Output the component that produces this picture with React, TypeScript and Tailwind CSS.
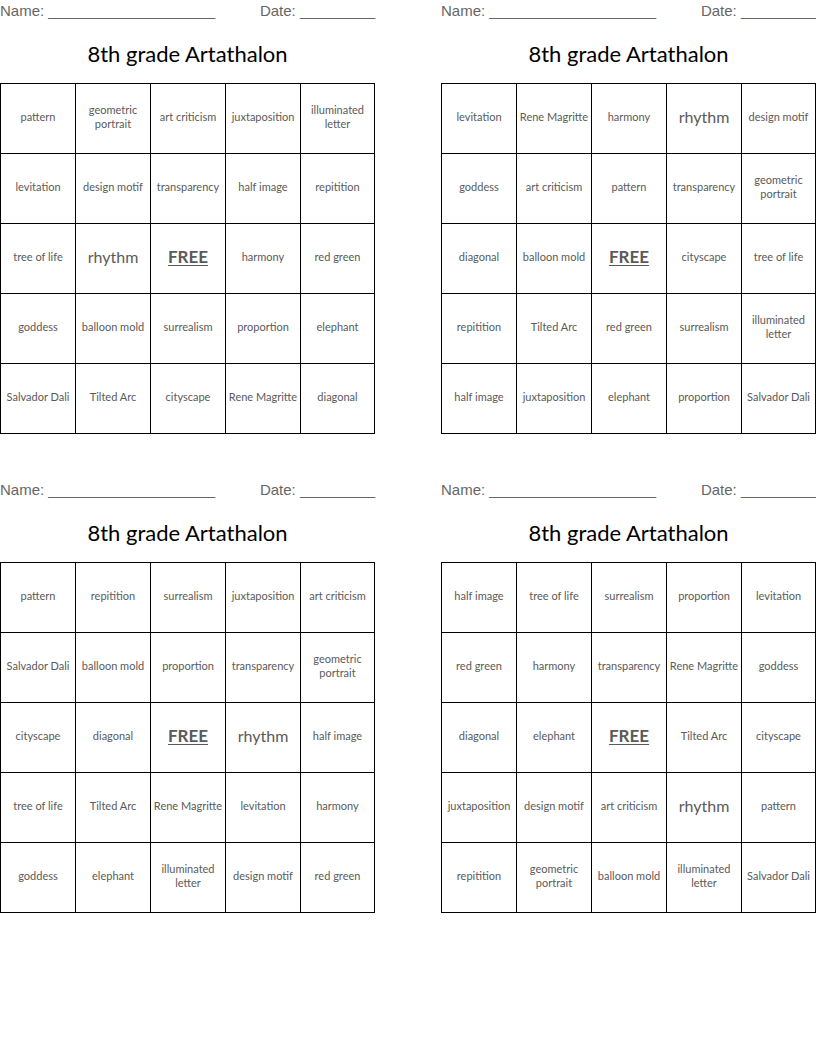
import React from 'react'

type Card = string[][]

const cards: Card[] = [
  [
    ['pattern', 'geometric portrait', 'art criticism', 'juxtaposition', 'illuminated letter'],
    ['levitation', 'design motif', 'transparency', 'half image', 'repitition'],
    ['tree of life', 'rhythm', 'FREE', 'harmony', 'red green'],
    ['goddess', 'balloon mold', 'surrealism', 'proportion', 'elephant'],
    ['Salvador Dali', 'Tilted Arc', 'cityscape', 'Rene Magritte', 'diagonal'],
  ],
  [
    ['levitation', 'Rene Magritte', 'harmony', 'rhythm', 'design motif'],
    ['goddess', 'art criticism', 'pattern', 'transparency', 'geometric portrait'],
    ['diagonal', 'balloon mold', 'FREE', 'cityscape', 'tree of life'],
    ['repitition', 'Tilted Arc', 'red green', 'surrealism', 'illuminated letter'],
    ['half image', 'juxtaposition', 'elephant', 'proportion', 'Salvador Dali'],
  ],
  [
    ['pattern', 'repitition', 'surrealism', 'juxtaposition', 'art criticism'],
    ['Salvador Dali', 'balloon mold', 'proportion', 'transparency', 'geometric portrait'],
    ['cityscape', 'diagonal', 'FREE', 'rhythm', 'half image'],
    ['tree of life', 'Tilted Arc', 'Rene Magritte', 'levitation', 'harmony'],
    ['goddess', 'elephant', 'illuminated letter', 'design motif', 'red green'],
  ],
  [
    ['half image', 'tree of life', 'surrealism', 'proportion', 'levitation'],
    ['red green', 'harmony', 'transparency', 'Rene Magritte', 'goddess'],
    ['diagonal', 'elephant', 'FREE', 'Tilted Arc', 'cityscape'],
    ['juxtaposition', 'design motif', 'art criticism', 'rhythm', 'pattern'],
    ['repitition', 'geometric portrait', 'balloon mold', 'illuminated letter', 'Salvador Dali'],
  ],
]

function Cell({ word }: { word: string }) {
  let cls = 'text-[11px] leading-[14px]'
  if (word === 'FREE') cls = 'text-[17px] font-bold underline underline-offset-2'
  else if (word === 'rhythm') cls = 'text-[16px]'
  return (
    <div className="flex h-[70px] items-center justify-center border-r border-b border-black pb-[3px] text-center text-[#5a5a5a]">
      <span className={cls}>{word}</span>
    </div>
  )
}

function BingoCard({ card }: { card: Card }) {
  return (
    <div className="w-[375px]">
      <div className="flex h-[22px] items-center justify-between font-['Liberation_Sans',sans-serif] text-[15px] text-[#666]">
        <span>Name: ____________________</span>
        <span>Date: _________</span>
      </div>
      <h1 className="mt-[18px] h-[28px] text-center text-[22px] leading-[28px] text-black">8th grade Artathalon</h1>
      <div className="mt-[15px] grid grid-cols-[75px_75px_75px_75px_74px] border-t border-l border-black">
        {card.flat().map((w, i) => (
          <Cell key={i} word={w} />
        ))}
      </div>
    </div>
  )
}

export default function App() {
  return (
    <div className="h-[1056px] w-[816px] bg-white font-['Lato',sans-serif]">
      <div className="grid grid-cols-[375px_375px] justify-between gap-y-[45px]">
        {cards.map((c, i) => (
          <BingoCard key={i} card={c} />
        ))}
      </div>
    </div>
  )
}
